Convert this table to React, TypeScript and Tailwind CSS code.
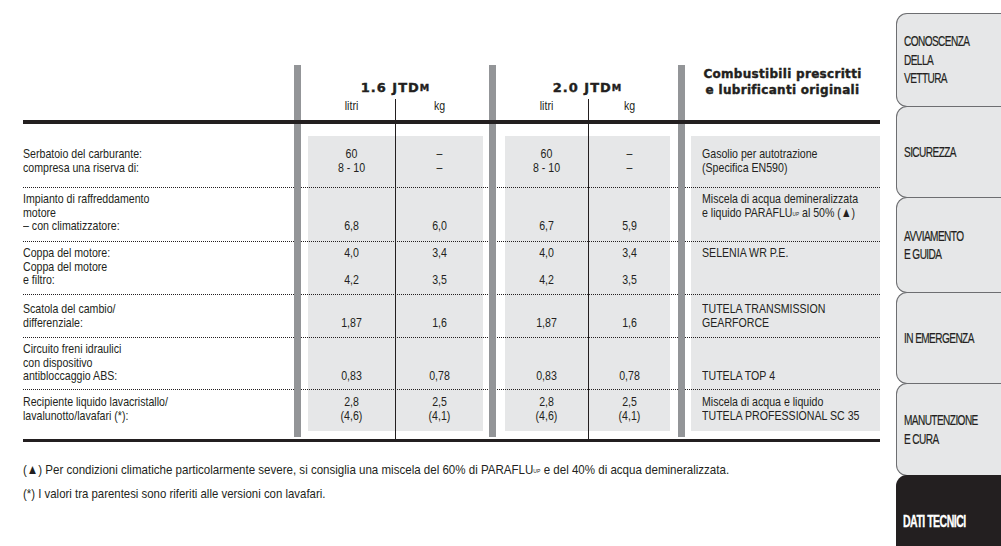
import React from "react";

const SANS = "font-['Liberation_Sans','Arial',sans-serif]";
const HEAVY = "font-['DejaVu_Sans','Liberation_Sans',sans-serif] font-bold [-webkit-text-stroke:0.4px_#231f20]";

type Row = {
  rowClass: string;
  pad: string;
  label: React.ReactNode[];
  values: React.ReactNode[][];
  fuel: React.ReactNode[];
};

const Paraflu = () => (
  <>
    PARAFLU<sup className="text-[6px] relative -top-[1px]">UP</sup>
  </>
);

const rows: Row[] = [
  {
    rowClass: "row-start-5",
    pad: "pt-[11px]",
    label: ["Serbatoio del carburante:", "compresa una riserva di:"],
    values: [
      ["60", "8 - 10"],
      ["–", "–"],
      ["60", "8 - 10"],
      ["–", "–"],
    ],
    fuel: ["Gasolio per autotrazione", "(Specifica EN590)"],
  },
  {
    rowClass: "row-start-7",
    pad: "pt-[4px]",
    label: ["Impianto di raffreddamento", "motore", "– con climatizzatore:"],
    values: [
      ["", "", "6,8"],
      ["", "", "6,0"],
      ["", "", "6,7"],
      ["", "", "5,9"],
    ],
    fuel: [
      "Miscela di acqua demineralizzata",
      <>
        e liquido <Paraflu /> al 50% (▲)
      </>,
    ],
  },
  {
    rowClass: "row-start-9",
    pad: "pt-[4px]",
    label: ["Coppa del motore:", "Coppa del motore", "e filtro:"],
    values: [
      ["4,0", "", "4,2"],
      ["3,4", "", "3,5"],
      ["4,0", "", "4,2"],
      ["3,4", "", "3,5"],
    ],
    fuel: ["SELENIA WR P.E."],
  },
  {
    rowClass: "row-start-11",
    pad: "pt-[7px]",
    label: ["Scatola del cambio/", "differenziale:"],
    values: [
      ["", "1,87"],
      ["", "1,6"],
      ["", "1,87"],
      ["", "1,6"],
    ],
    fuel: ["TUTELA TRANSMISSION", "GEARFORCE"],
  },
  {
    rowClass: "row-start-13",
    pad: "pt-[4px]",
    label: ["Circuito freni idraulici", "con dispositivo", "antibloccaggio ABS:"],
    values: [
      ["", "", "0,83"],
      ["", "", "0,78"],
      ["", "", "0,83"],
      ["", "", "0,78"],
    ],
    fuel: ["", "", "TUTELA TOP 4"],
  },
  {
    rowClass: "row-start-15",
    pad: "pt-[5px]",
    label: ["Recipiente liquido lavacristallo/", "lavalunotto/lavafari (*):"],
    values: [
      ["2,8", "(4,6)"],
      ["2,5", "(4,1)"],
      ["2,8", "(4,6)"],
      ["2,5", "(4,1)"],
    ],
    fuel: ["Miscela di acqua e liquido", "TUTELA PROFESSIONAL SC 35"],
  },
];

const valueCols = ["col-start-4", "col-start-6", "col-start-10", "col-start-12"];
const sepRows = ["row-start-6", "row-start-8", "row-start-10", "row-start-12", "row-start-14"];

function Lines({ lines, center }: { lines: React.ReactNode[]; center?: boolean }) {
  return (
    <>
      {lines.map((l, i) => (
        <div
          key={i}
          className={`h-[13.5px] leading-[13.5px] whitespace-nowrap scale-x-[0.785] ${center ? "origin-center text-center" : "origin-left"}`}
        >
          {l === "" ? "\u00a0" : l}
        </div>
      ))}
    </>
  );
}

function Tab({
  h,
  first,
  children,
}: {
  h: string;
  first?: boolean;
  children: React.ReactNode;
}) {
  return (
    <div
      className={`${h} shrink-0 ${first ? "" : "-mt-px"} flex items-center pl-[7px] bg-[#e6e7e8] border border-r-0 border-[#6d6e71] rounded-l-[11px]`}
    >
      <div className="text-[14px] leading-[18.5px] tracking-[-0.8px] text-[#231f20] uppercase whitespace-nowrap origin-left scale-x-[0.72] [-webkit-text-stroke:0.2px_#231f20]">
        {children}
      </div>
    </div>
  );
}

export default function App() {
  return (
    <div className={`w-[1001px] h-[546px] overflow-hidden bg-white flex ${SANS} text-[#231f20]`}>
      <div className="w-[880px] shrink-0 pl-[23px] pt-[65px]">
        <div className="grid grid-cols-[271px_7px_7px_87px_1px_87px_6px_7px_9px_83px_1px_81px_8px_7px_6px_189px] grid-rows-[34px_21px_4px_12px_51px_1px_53px_1px_52px_1px_42px_1px_51px_1px_41px_6px_2px_3px] text-[13.5px]">
          {/* gray blocks */}
          <div className="col-start-4 col-span-3 row-start-5 row-span-11 bg-[#e6e7e8]" />
          <div className="col-start-10 col-span-3 row-start-5 row-span-11 bg-[#e6e7e8]" />
          <div className="col-start-16 col-span-1 row-start-5 row-span-11 bg-[#e6e7e8]" />

          {/* dotted separators */}
          {sepRows.map((r) => (
            <div key={r} className={`col-start-1 col-span-16 ${r} border-t border-dotted border-[#231f20]`} />
          ))}

          {/* thin vertical lines */}
          <div className="col-start-5 row-start-2 row-span-16 bg-[#231f20]" />
          <div className="col-start-11 row-start-2 row-span-16 bg-[#231f20]" />

          {/* gray bars */}
          <div className="col-start-2 row-start-1 row-span-16 bg-[#939598]" />
          <div className="col-start-8 row-start-1 row-span-16 bg-[#939598]" />
          <div className="col-start-14 row-start-1 row-span-16 bg-[#939598]" />

          {/* thick lines */}
          <div className="col-start-1 col-span-16 row-start-3 bg-[#231f20]" />
          <div className="col-start-1 col-span-16 row-start-18 bg-[#231f20]" />

          {/* headers */}
          <div className={`col-start-4 col-span-3 row-start-1 flex items-end justify-center pb-[3px] ${HEAVY} text-[13px] leading-[16px] tracking-[1px]`}>
            1.6 JTD<span className="text-[9.5px]">M</span>
          </div>
          <div className="col-start-4 row-start-2 leading-[14px]">
            <Lines lines={["litri"]} center />
          </div>
          <div className="col-start-6 row-start-2 leading-[14px]">
            <Lines lines={["kg"]} center />
          </div>

          <div className={`col-start-10 col-span-3 row-start-1 flex items-end justify-center pb-[3px] ${HEAVY} text-[13px] leading-[16px] tracking-[1px]`}>
            2.0 JTD<span className="text-[9.5px]">M</span>
          </div>
          <div className="col-start-10 row-start-2 leading-[14px]">
            <Lines lines={["litri"]} center />
          </div>
          <div className="col-start-12 row-start-2 leading-[14px]">
            <Lines lines={["kg"]} center />
          </div>

          <div className={`col-start-15 col-span-2 row-start-1 row-span-2 text-center ${HEAVY} text-[12px] leading-[16px] tracking-[0.3px] pt-[1px]`}>
            <div>Combustibili prescritti</div>
            <div>e lubrificanti originali</div>
          </div>

          {/* data */}
          {rows.map((row, ri) => (
            <React.Fragment key={ri}>
              <div className={`col-start-1 ${row.rowClass} ${row.pad}`}>
                <Lines lines={row.label} />
              </div>
              {row.values.map((v, vi) => (
                <div key={vi} className={`${valueCols[vi]} ${row.rowClass} ${row.pad}`}>
                  <Lines lines={v} center />
                </div>
              ))}
              <div className={`col-start-16 ${row.rowClass} ${row.pad} pl-[11px]`}>
                <Lines lines={row.fuel} />
              </div>
            </React.Fragment>
          ))}
        </div>

        <div className="mt-[16px] text-[13.5px] leading-[24px]">
          <div className="whitespace-nowrap origin-left scale-x-[0.855]">
            (▲) Per condizioni climatiche particolarmente severe, si consiglia una miscela del 60% di <Paraflu /> e del 40% di acqua demineralizzata.
          </div>
          <div className="whitespace-nowrap origin-left scale-x-[0.845]">
            (*) I valori tra parentesi sono riferiti alle versioni con lavafari.
          </div>
        </div>
      </div>

      <div className="ml-[16px] w-[105px] shrink-0 pt-[13px] flex flex-col">
        <Tab h="h-[94px]" first>
          <div>Conoscenza</div>
          <div>della</div>
          <div>vettura</div>
        </Tab>
        <Tab h="h-[92px]">
          <div>Sicurezza</div>
        </Tab>
        <Tab h="h-[96px]">
          <div>Avviamento</div>
          <div>e guida</div>
        </Tab>
        <Tab h="h-[92px]">
          <div>In emergenza</div>
        </Tab>
        <Tab h="h-[93px]">
          <div>Manutenzione</div>
          <div>e cura</div>
        </Tab>
        <div className="-mt-px h-[92px] shrink-0 bg-[#231f20] rounded-tl-[11px] pl-[7px] pt-[37px]">
          <div className="text-[16px] leading-[20px] tracking-[-0.8px] text-white font-bold uppercase whitespace-nowrap origin-left scale-x-[0.66] [-webkit-text-stroke:0.3px_#ffffff]">
            Dati tecnici
          </div>
        </div>
      </div>
    </div>
  );
}
